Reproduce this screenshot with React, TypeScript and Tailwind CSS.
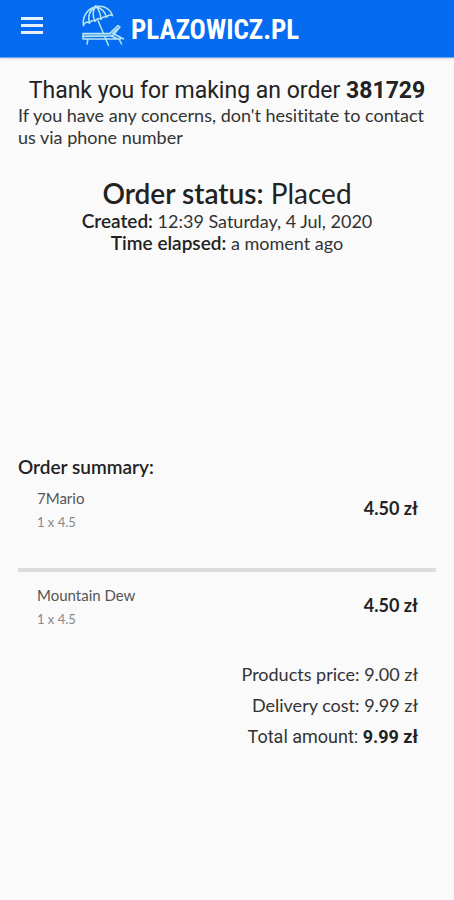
import React from 'react';

interface OrderItem {
  name: string;
  quantity: number;
  unitPrice: number;
}

const items: OrderItem[] = [
  { name: '7Mario', quantity: 1, unitPrice: 4.5 },
  { name: 'Mountain Dew', quantity: 1, unitPrice: 4.5 },
];

const formatPrice = (value: number) => `${value.toFixed(2)} zł`;

const BeachIcon: React.FC = () => (
  <svg viewBox="0 0 44 42" className="w-11 h-[42px] shrink-0" fill="none" stroke="#b4e6f2" strokeWidth="1.5" strokeLinecap="round" strokeLinejoin="round" aria-hidden="true">
    {/* umbrella */}
    <path d="M2.500 20.500C1 12 6 4 15 1.500C23 .5 29 4 31.500 10.500" />
    <path d="M2.500 20.500L3.500 18.500Q6 16 8.500 18Q10.500 14.500 14 16Q16.500 12.500 20 14Q22 11 25.500 12Q28 9 31.500 10.500" />
    <path d="M8.500 18C6.500 11 9 5 15 1.500M14 16C11 10 12 5 15 1.500M20 14C19.500 8 18 4.500 15 1.500M25.500 12C24 7 20 3 15 1.500" />
    <path d="M14.500 .8L15 1.500M17 15.500L27.500 40.500" />
    {/* deck chair */}
    <path d="M2 28.500H28.500L37 20.500L39 22L31.500 31L2 31.500Z" fill="#5fa6e8" />
    <path d="M2 34H39.500M2 31.500V34M7 34L6 39M38 34L40.500 39M33 29L42.500 34M30.500 31L37 34M32 28L36.500 24" />
  </svg>
);

const Header: React.FC = () => (
  <header className="h-[58px] flex items-center bg-[#056bf1] border-b border-[#6aa4ee] shadow-sm pl-5">
    <button type="button" aria-label="Open menu" className="w-6 h-6 -mt-1.5 flex flex-col items-center justify-center gap-1">
      <span className="w-[22px] h-[3px] bg-white/90" />
      <span className="w-[22px] h-[3px] bg-white/90" />
      <span className="w-[22px] h-[3px] bg-white/90" />
    </button>
    <a href="#" className="ml-[37px] -mt-1.5 flex items-center text-white">
      <BeachIcon />
      <span className="ml-1.5 mt-2 font-['Roboto_Condensed','Lato',sans-serif] text-[27px] leading-8 font-bold">
        PLAZOWICZ.PL
      </span>
    </a>
  </header>
);

const App: React.FC = () => {
  return (
    <div className="min-h-screen bg-[#fafafa] font-['Lato',sans-serif] text-lg leading-[22px] text-[#333333] [font-variant-ligatures:none]">
      <Header />
      <main className="px-[18px] pt-[18px]">
        <section>
          <h1 className="pt-0.5 text-center font-['Roboto',sans-serif] text-[23px] leading-[26px] text-[#222222]">
            Thank you for making an order <b>381729</b>
          </h1>
          <p>If you have any concerns, don't hesititate to contact us via phone number</p>
        </section>

        <section className="mt-7 text-center">
          <h2 className="text-[28px] leading-[34px] text-[#222222]">
            <b className="font-semibold">Order status:</b> Placed
          </h2>
          <p><b className="text-[19px] font-semibold text-[#222222]">Created:</b> 12:39 Saturday, 4 Jul, 2020</p>
          <p><b className="text-[19px] font-semibold text-[#222222]">Time elapsed:</b> a moment ago</p>
        </section>

        <section className="mt-[202px]">
          <h3 className="text-[19px] leading-[22px] font-semibold text-[#222222]">Order summary:</h3>
          <ul className="divide-y-4 divide-[#dcdcdc]">
            {items.map((item) => (
              <li key={item.name} className="pt-2 pb-[34px] pl-[19px] pr-[18px] flex justify-between last:pt-[11px] last:pb-7">
                <div>
                  <div className="text-[15px] leading-6 text-[#555555]">{item.name}</div>
                  <div className="text-[13px] leading-6 text-[#888888]">{item.quantity} x {item.unitPrice}</div>
                </div>
                <div className="leading-[44px] font-bold text-[#222222]">{formatPrice(item.unitPrice)}</div>
              </li>
            ))}
          </ul>
          <div className="pr-[18px] text-right leading-[31px]">
            <p>Products price: {formatPrice(9)}</p>
            <p>Delivery cost: {formatPrice(9.99)}</p>
            <p className="font-['Roboto',sans-serif]">
              Total amount: <b className="text-[#222222]">{formatPrice(9.99)}</b>
            </p>
          </div>
        </section>
      </main>
    </div>
  );
};

export default App;
